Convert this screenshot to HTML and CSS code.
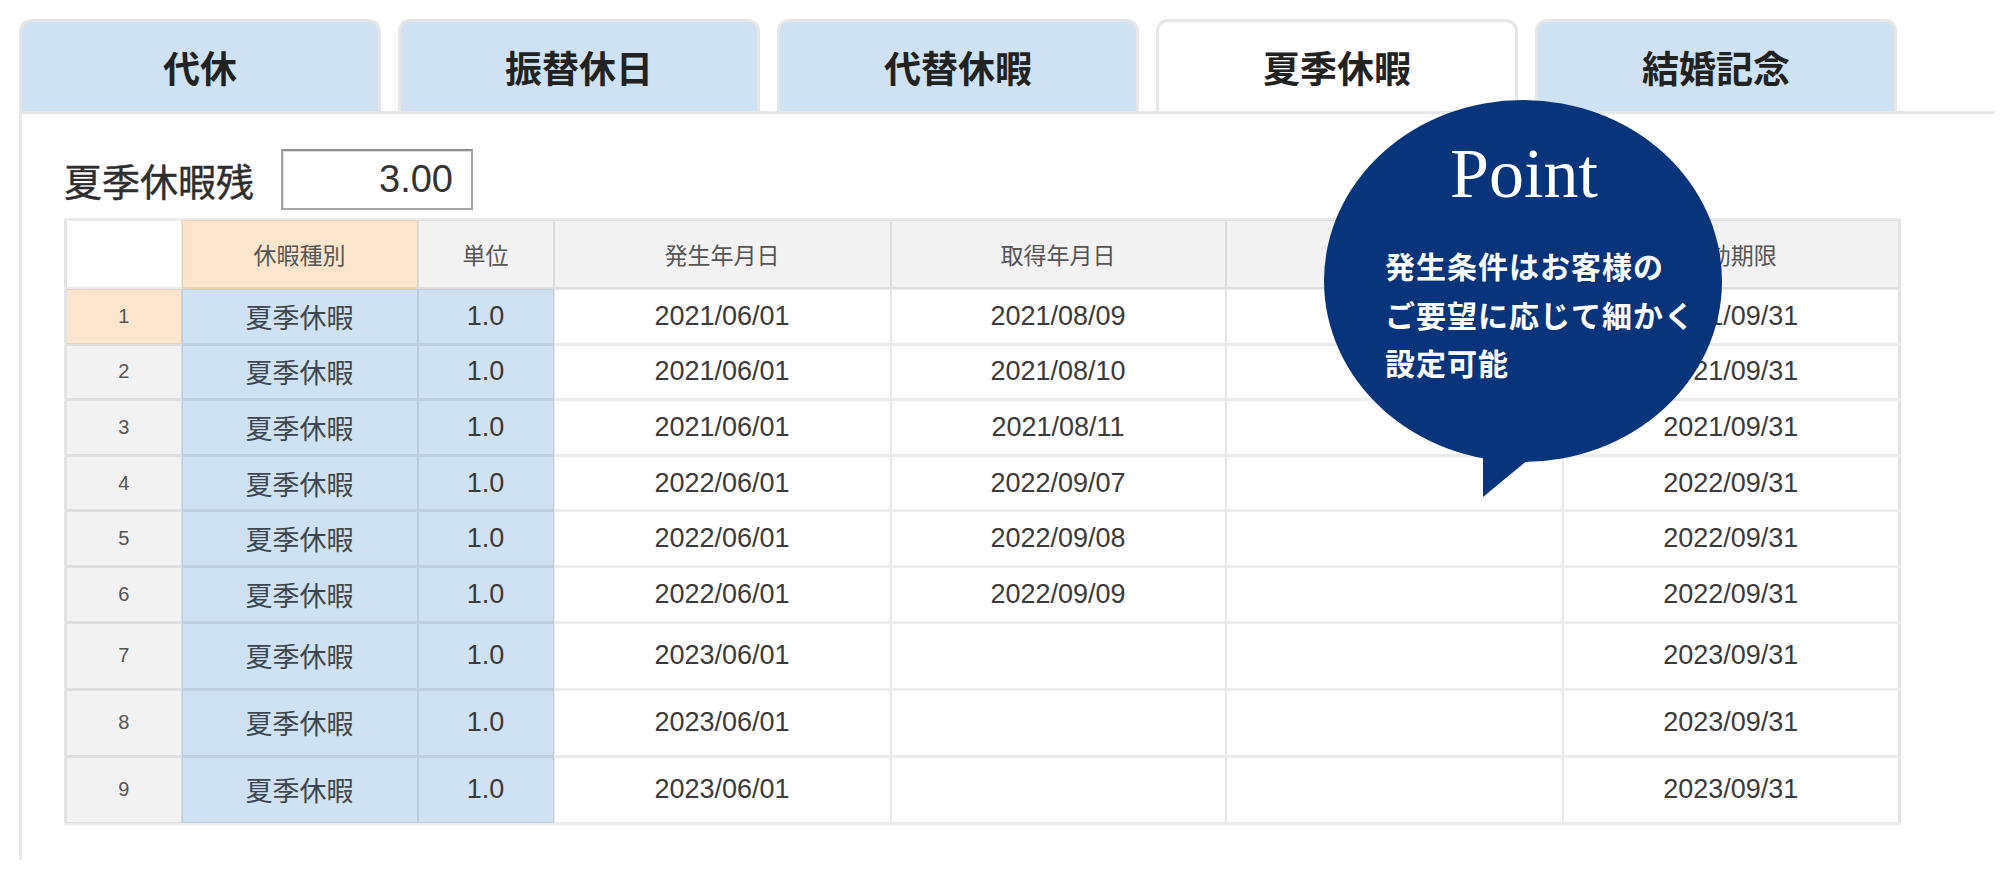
FILE: index.html
```html
<!DOCTYPE html>
<html lang="ja">
<head>
  <meta charset="UTF-8">
  <title>夏季休暇</title>
  <link rel="stylesheet" href="styles.css">
</head>
<body>
  <div class="page">
    <div class="tabs">
      <div class="tab">代休</div>
      <div class="tab">振替休日</div>
      <div class="tab">代替休暇</div>
      <div class="tab active">夏季休暇</div>
      <div class="tab">結婚記念</div>
    </div>
    <div class="panel">
      <div class="remain">
        <span class="remain-label">夏季休暇残</span>
        <div class="remain-box">3.00</div>
      </div>
      <table class="grid">
        <colgroup>
          <col style="width:116px"><col style="width:236px"><col style="width:136px">
          <col style="width:337px"><col style="width:335px"><col style="width:337px"><col style="width:337px">
        </colgroup>
        <tr class="head">
          <th class="corner"></th><th class="sel">休暇種別</th><th>単位</th>
          <th>発生年月日</th><th>取得年月日</th><th>取消年月日</th><th>有効期限</th>
        </tr>
        <tr><td class="no sel">1</td><td class="kind">夏季休暇</td><td class="unit">1.0</td><td>2021/06/01</td><td>2021/08/09</td><td></td><td>2021/09/31</td></tr>
        <tr><td class="no">2</td><td class="kind">夏季休暇</td><td class="unit">1.0</td><td>2021/06/01</td><td>2021/08/10</td><td></td><td>2021/09/31</td></tr>
        <tr><td class="no">3</td><td class="kind">夏季休暇</td><td class="unit">1.0</td><td>2021/06/01</td><td>2021/08/11</td><td></td><td>2021/09/31</td></tr>
        <tr><td class="no">4</td><td class="kind">夏季休暇</td><td class="unit">1.0</td><td>2022/06/01</td><td>2022/09/07</td><td></td><td>2022/09/31</td></tr>
        <tr><td class="no">5</td><td class="kind">夏季休暇</td><td class="unit">1.0</td><td>2022/06/01</td><td>2022/09/08</td><td></td><td>2022/09/31</td></tr>
        <tr><td class="no">6</td><td class="kind">夏季休暇</td><td class="unit">1.0</td><td>2022/06/01</td><td>2022/09/09</td><td></td><td>2022/09/31</td></tr>
        <tr class="tall"><td class="no">7</td><td class="kind">夏季休暇</td><td class="unit">1.0</td><td>2023/06/01</td><td></td><td></td><td>2023/09/31</td></tr>
        <tr class="tall"><td class="no">8</td><td class="kind">夏季休暇</td><td class="unit">1.0</td><td>2023/06/01</td><td></td><td></td><td>2023/09/31</td></tr>
        <tr class="tall"><td class="no">9</td><td class="kind">夏季休暇</td><td class="unit">1.0</td><td>2023/06/01</td><td></td><td></td><td>2023/09/31</td></tr>
      </table>
    </div>

    <!-- 吹き出し -->
    <div class="point">
      <svg class="point-bg" width="400" height="400" viewBox="0 0 400 400">
        <ellipse cx="199" cy="181" rx="199" ry="181" fill="#07347a"/>
        <path d="M159 330 L159 397 L222 345 Z" fill="#07347a"/>
      </svg>
      <div class="point-title">Point</div>
      <p class="point-text">発生条件はお客様の<br>ご要望に応じて細かく<br>設定可能</p>
    </div>
  </div>
</body>
</html>
```

FILE: styles.css
```css
body {
  margin: 0;
  background: #fff;
  color: #333;
  font-family: "Noto Sans CJK JP", "Liberation Sans", sans-serif;
}
.page { position: relative; width: 2000px; height: 873px; overflow: hidden; }

/* タブ */
.tabs { display: flex; gap: 17px; padding: 19px 0 0 19px; }
.tab {
  width: 356px; height: 89px; box-sizing: content-box;
  display: flex; align-items: center; justify-content: center;
  background: #cfe2f3; border: 3px solid #e6e6e6; border-bottom: 0;
  border-radius: 12px 12px 0 0;
  font-size: 37px; font-weight: bold; color: #222;
}
.tab.active { background: #fff; }

/* パネル */
.panel {
  margin: 0 5px 0 19px; height: 749px;
  border-top: 3px solid #e6e6e6; border-left: 3px solid #e8e8e8;
  padding-left: 42px; box-sizing: border-box;
}
.remain { display: flex; align-items: center; gap: 27px; padding-top: 35px; margin-bottom: 8px; }
.remain-label { font-size: 38px; color: #2e2e2e; line-height: 61px; -webkit-text-stroke: 0.4px #2e2e2e; }
.remain-box {
  height: 57px; width: 170px; padding-right: 18px;
  border: 2px solid #a6a6a6; border-top-color: #8f8f8f;
  box-shadow: inset 1px 1px 0 #ddd;
  text-align: right;
  font-family: "Liberation Sans", sans-serif;
  font-size: 38px; line-height: 57px; color: #333;
}

/* 表 */
.grid {
  border-collapse: collapse; table-layout: fixed; width: 1834px;
  border: 3px solid #e3e3e3;
  font-family: "Liberation Sans", "Noto Sans CJK JP", sans-serif;
  font-size: 27px; color: #3a3a3a;
}
.grid th, .grid td {
  border-top: 3px solid rgba(0, 0, 0, 0.08); border-bottom: 3px solid rgba(0, 0, 0, 0.08);
  border-left: 2px solid rgba(0, 0, 0, 0.09); border-right: 2px solid rgba(0, 0, 0, 0.09);
  text-align: center; padding: 0; height: 52.6px;
}
.grid tr.head th {
  height: 66px; background: #f2f2f2;
  font-family: "Noto Sans CJK JP", sans-serif; font-weight: normal;
  font-size: 23px; color: #555;
}
.grid tr.head th.corner { background: #fff; }
.grid tr.head th.sel { background: #fce5cd; }
.grid tr.tall td { height: 64px; }
.grid td.no { background: #f2f2f2; font-size: 20px; color: #555; }
.grid td.no.sel { background: #fce5cd; }
.grid td.kind { background: #cfe2f3; font-family: "Noto Sans CJK JP", sans-serif; font-size: 27px; color: #3d4650; }
.grid td.unit { background: #cfe2f3; }

/* Point 吹き出し */
.point { position: absolute; left: 1324px; top: 100px; width: 400px; height: 400px; color: #fff; }
.point-bg { position: absolute; left: 0; top: 0; }
.point-title {
  position: relative; padding-top: 34px; text-align: center;
  font-family: "Liberation Serif", serif; font-size: 70px; line-height: 80px;
}
.point-text {
  position: relative; margin: 27px 0 0; padding-left: 61px;
  font-size: 30px; line-height: 48.5px; font-weight: bold; letter-spacing: 1px;
}
```
